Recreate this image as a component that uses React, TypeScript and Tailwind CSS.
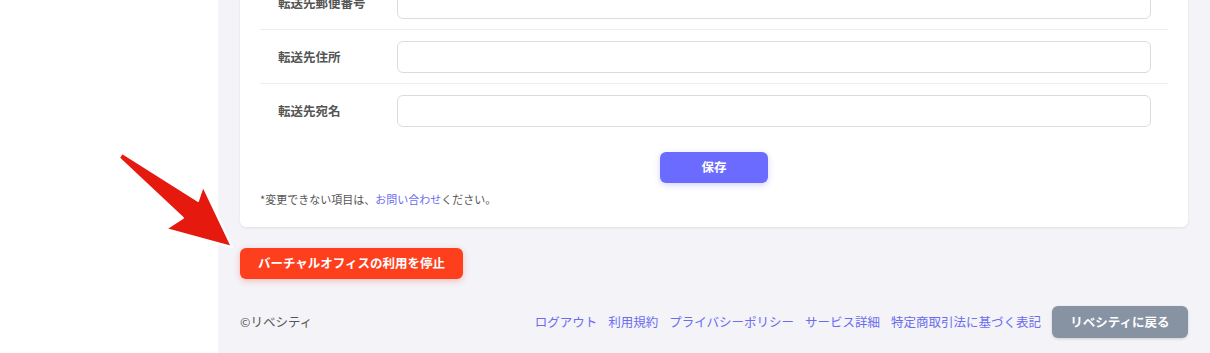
const links = ["ログアウト", "利用規約", "プライバシーポリシー", "サービス詳細", "特定商取引法に基づく表記"];
const rows = ["転送先郵便番号", "転送先住所", "転送先宛名"];

function Arrow() {
    return (
        <svg
            className="absolute left-0 top-0 pointer-events-none"
            width="260"
            height="260"
            viewBox="0 0 260 260"
        >
            <polygon
                points="122,153 198,201 203,186 232,247 166,229 183,218 119,158"
                fill="#e5190e"
                stroke="#ffffff"
                strokeWidth="2"
                strokeLinejoin="round"
            />
        </svg>
    );
}

export default function App() {
    return (
        <div
            className="relative flex w-[1210px] h-[353px] overflow-hidden bg-white"
            style={{ fontFamily: '"Noto Sans CJK JP", "Noto Sans", sans-serif' }}
        >
            <aside className="w-[218px] shrink-0 bg-white" />
            <main className="flex-1 bg-[#f3f3f8] px-[22px]">
                <div className="-mt-[24px] rounded-md bg-white px-5 pb-5 shadow-[0_1px_3px_rgba(0,0,0,0.08)]">
                    {rows.map((label, i) => (
                        <div
                            key={label}
                            className={`flex items-center pt-[11px] pb-[10px] ${i < rows.length - 1 ? "border-b border-[#ececf0]" : ""}`}
                        >
                            <div className="w-[137px] shrink-0 pl-[18px] text-[12.5px] font-bold text-[#555]">
                                {label}
                            </div>
                            <div className="mr-[17px] h-8 flex-1 rounded-md border border-[#dcdce0] bg-white" />
                        </div>
                    ))}
                    <div className="mt-[15px] flex justify-center">
                        <button
                            type="button"
                            className="h-[31px] w-[108px] rounded-md bg-[#6b6cff] text-[12.5px] font-bold text-white shadow-[0_2px_6px_rgba(107,108,255,0.3)]"
                        >
                            保存
                        </button>
                    </div>
                    <p className="mt-2 text-[11px] leading-4 text-[#555]">
                        *変更できない項目は、<span className="text-[#6b6cef]">お問い合わせ</span>ください。
                    </p>
                </div>

                <button
                    type="button"
                    className="mt-[21px] h-[31px] w-[223px] rounded-md bg-[#fe3f1e] text-[12.5px] font-bold text-white shadow-[0_2px_6px_rgba(254,63,30,0.3)]"
                >
                    バーチャルオフィスの利用を停止
                </button>

                <footer className="mt-[27px] flex items-center justify-between">
                    <span className="text-[12.5px] text-[#555]">©リベシティ</span>
                    <div className="flex items-center gap-[11px]">
                        {links.map((l) => (
                            <span key={l} className="text-[12.5px] text-[#6b6cef]">
                                {l}
                            </span>
                        ))}
                        <button
                            type="button"
                            className="h-8 w-[136px] rounded-md bg-[#8792a2] text-[12.5px] font-bold text-white shadow-[0_1px_3px_rgba(0,0,0,0.15)]"
                        >
                            リベシティに戻る
                        </button>
                    </div>
                </footer>
            </main>
            <Arrow />
        </div>
    );
}
